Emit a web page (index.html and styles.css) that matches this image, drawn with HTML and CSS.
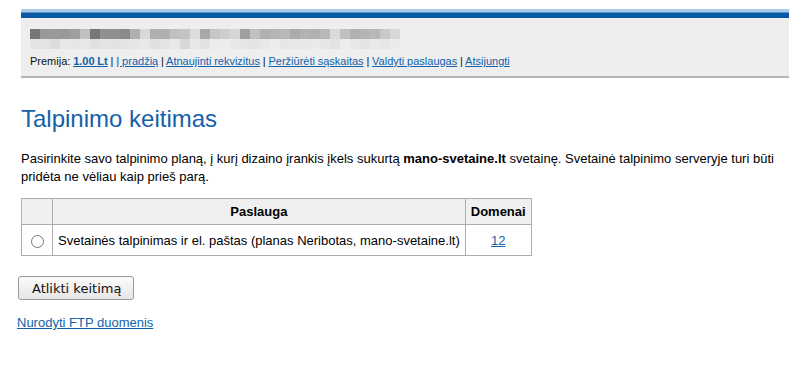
FILE: index.html
```html
<!DOCTYPE html>
<html lang="lt">
<head>
  <meta charset="UTF-8">
  <title>Talpinimo keitimas</title>
  <link rel="stylesheet" href="styles.css">
</head>
<body>
  <div class="page">
    <header class="topbar">
      <div class="stripe"></div>
      <div class="account">
        <div class="mosaic">
          <div class="mosaic-row dark">
            <i style="background:#777"></i><i style="background:#999"></i><i style="background:#9a9a9a"></i><i style="background:#999"></i><i style="background:#a0a0a0"></i><i style="background:#c0c0c0"></i><i style="background:#777"></i><i style="background:#919191"></i><i style="background:#8f8f8f"></i><i style="background:#8a8a8a"></i><i style="background:#b0b0b0"></i><i style="background:#d9d9d9"></i><i style="background:#b0b0b0"></i><i style="background:#b0b0b0"></i><i style="background:#c0c0c0"></i><i style="background:#c4c4c4"></i><i style="background:#ddd"></i><i style="background:#a8a8a8"></i><i style="background:#c6c6c6"></i><i style="background:#cecece"></i><i style="background:#d6d6d6"></i><i style="background:#9e9e9e"></i><i style="background:#c0c0c0"></i><i style="background:#b0b0b0"></i><i style="background:#b4b4b4"></i><i style="background:#b8b8b8"></i><i style="background:#ababab"></i><i style="background:#b3b3b3"></i><i style="background:#b0b0b0"></i><i style="background:#b8b8b8"></i><i style="background:#dadada"></i><i style="background:#c0c0c0"></i><i style="background:#b0b0b0"></i><i style="background:#b4b4b4"></i><i style="background:#b8b8b8"></i><i style="background:#c8c8c8"></i><i style="background:#d8d8d8"></i>
          </div>
          <div class="mosaic-row light">
            <i style="background:#e4e4e4"></i><i style="background:#e4e4e4"></i><i style="background:#dcdcdc"></i><i style="background:#e8e8e8"></i><i style="background:#e6e6e6"></i><i style="background:#e8e8e8"></i><i style="background:#e0e0e0"></i><i style="background:#e4e4e4"></i><i style="background:#e2e2e2"></i><i style="background:#e4e4e4"></i><i style="background:#e6e6e6"></i><i style="background:#e8e8e8"></i><i style="background:#e0e0e0"></i><i style="background:#e4e4e4"></i><i style="background:#e8e8e8"></i><i style="background:#d8d8d8"></i><i style="background:#e8e8e8"></i><i style="background:#e2e2e2"></i><i style="background:#ececec"></i><i style="background:#ececec"></i><i style="background:#e8e8e8"></i><i style="background:#e6e6e6"></i><i style="background:#e4e4e4"></i><i style="background:#e8e8e8"></i><i style="background:#ececec"></i><i style="background:#e6e6e6"></i><i style="background:#e8e8e8"></i><i style="background:#e8e8e8"></i><i style="background:#eaeaea"></i><i style="background:#e6e6e6"></i><i style="background:#e2e2e2"></i><i style="background:#ececec"></i><i style="background:#e8e8e8"></i><i style="background:#e4e4e4"></i><i style="background:#e8e8e8"></i><i style="background:#e6e6e6"></i><i style="background:#eaeaea"></i>
          </div>
        </div>
        <p class="menu">
          Premija: <a href="#" class="bonus">1.00 Lt</a> |
          <a href="#">Į pradžią</a> |
          <a href="#">Atnaujinti rekvizitus</a> |
          <a href="#">Peržiūrėti sąskaitas</a> |
          <a href="#">Valdyti paslaugas</a> |
          <a href="#">Atsijungti</a>
        </p>
      </div>
    </header>

    <h1>Talpinimo keitimas</h1>
    <p class="intro">Pasirinkite savo talpinimo planą, į kurį dizaino įrankis įkels sukurtą <strong>mano-svetaine.lt</strong> svetainę. Svetainė talpinimo serveryje turi būti pridėta ne vėliau kaip prieš parą.</p>

    <table class="plans">
      <tr>
        <th class="pick"></th>
        <th>Paslauga</th>
        <th>Domenai</th>
      </tr>
      <tr>
        <td class="pick"><input type="radio" name="plan"></td>
        <td>Svetainės talpinimas ir el. paštas (planas Neribotas, mano-svetaine.lt)</td>
        <td class="count"><a href="#">12</a></td>
      </tr>
    </table>

    <button class="submit">Atlikti keitimą</button>

    <p class="ftp"><a href="#">Nurodyti FTP duomenis</a></p>
  </div>
</body>
</html>
```

FILE: styles.css
```css
body {
  margin: 0;
  font-family: "Liberation Sans", Arial, sans-serif;
  font-size: 13px;
  color: #000;
  background: #fff;
}

a {
  color: #1162ab;
}

.page {
  padding: 9px 11px 0 21px;
}

.topbar {
  background: #eee;
  border-bottom: 2px solid #b4b4b4;
}

.stripe {
  height: 9px;
  background: linear-gradient(to bottom, #a9cbeb 0, #a9cbeb 3px, #0a5aa5 4px, #0656a0 9px);
}

.account {
  padding: 11px 9px 8px;
}

.mosaic-row {
  display: flex;
}

.mosaic-row i {
  width: 10px;
  height: 10px;
}

.menu {
  margin: 6px 0 0;
  font-size: 11px;
  line-height: 13px;
  color: #111;
  word-spacing: -0.25px;
}

.menu .bonus {
  font-weight: bold;
}

h1 {
  margin: 27px 0 0;
  font-size: 24px;
  font-weight: normal;
  line-height: 28px;
  color: #1560a8;
}

.intro {
  margin: 17px 0 0;
  line-height: 18px;
}

.plans {
  margin-top: 12px;
  border-collapse: collapse;
  font-size: 13px;
}

.plans th,
.plans td {
  border: 1px solid #adadad;
  padding: 0 5px;
}

.plans th {
  background: #f0f0f0;
  height: 25px;
  font-weight: bold;
}

.plans td {
  height: 30px;
}

.plans .pick {
  width: 22px;
  padding: 0 4px;
  text-align: center;
}

.plans .pick input {
  margin: 0;
  vertical-align: middle;
}

.plans .count {
  text-align: center;
}

.submit {
  margin: 20px 0 0 -3px;
  font-family: "DejaVu Sans", sans-serif;
  font-size: 13px;
  height: 24px;
  padding: 0 12px 0 13px;
  background: linear-gradient(#fbfbfb, #e6e6e6);
  border: 1px solid #9a9a9a;
  border-radius: 3px;
  color: #111;
}

.ftp {
  margin: 15px 0 0 -4px;
  font-size: 13px;
}
```
